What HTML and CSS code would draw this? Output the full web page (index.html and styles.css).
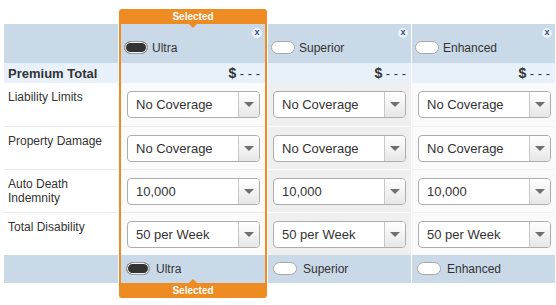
FILE: index.html
```html
<!DOCTYPE html>
<html>
<head>
<meta charset="utf-8">
<link rel="stylesheet" href="styles.css">
</head>
<body>
<div class="grid">
  <div class="col labels">
    <div class="spacer"></div>
    <div class="cell head"></div>
    <div class="cell prem"><span class="prem-title">Premium Total</span></div>
    <div class="cell body">Liability Limits</div>
    <div class="cell body">Property Damage</div>
    <div class="cell body">Auto Death<br>Indemnity</div>
    <div class="cell body">Total Disability</div>
    <div class="cell foot"></div>
  </div>

  <div class="col plan sel">
    <div class="tab tab-top">Selected</div>
    <div class="cell head">
      <span class="x">x</span>
      <div class="opt"><span class="pill on"></span><span>Ultra</span></div>
    </div>
    <div class="cell prem price"><b>$</b>&nbsp;- - -</div>
    <div class="cell body"><div class="dd"><span class="dd-text">No Coverage</span><span class="dd-arrow"></span></div></div>
    <div class="cell body"><div class="dd"><span class="dd-text">No Coverage</span><span class="dd-arrow"></span></div></div>
    <div class="cell body"><div class="dd"><span class="dd-text">10,000</span><span class="dd-arrow"></span></div></div>
    <div class="cell body"><div class="dd"><span class="dd-text">50 per Week</span><span class="dd-arrow"></span></div></div>
    <div class="cell foot"><div class="opt"><span class="pill on"></span><span>Ultra</span></div></div>
    <div class="tab tab-bottom">Selected</div>
  </div>

  <div class="col plan gray">
    <div class="spacer"></div>
    <div class="cell head">
      <span class="x">x</span>
      <div class="opt"><span class="pill"></span><span>Superior</span></div>
    </div>
    <div class="cell prem price"><b>$</b>&nbsp;- - -</div>
    <div class="cell body"><div class="dd"><span class="dd-text">No Coverage</span><span class="dd-arrow"></span></div></div>
    <div class="cell body"><div class="dd"><span class="dd-text">No Coverage</span><span class="dd-arrow"></span></div></div>
    <div class="cell body"><div class="dd"><span class="dd-text">10,000</span><span class="dd-arrow"></span></div></div>
    <div class="cell body"><div class="dd"><span class="dd-text">50 per Week</span><span class="dd-arrow"></span></div></div>
    <div class="cell foot"><div class="opt"><span class="pill"></span><span>Superior</span></div></div>
  </div>

  <div class="col plan light">
    <div class="spacer"></div>
    <div class="cell head">
      <span class="x">x</span>
      <div class="opt"><span class="pill"></span><span>Enhanced</span></div>
    </div>
    <div class="cell prem price"><b>$</b>&nbsp;- - -</div>
    <div class="cell body"><div class="dd"><span class="dd-text">No Coverage</span><span class="dd-arrow"></span></div></div>
    <div class="cell body"><div class="dd"><span class="dd-text">No Coverage</span><span class="dd-arrow"></span></div></div>
    <div class="cell body"><div class="dd"><span class="dd-text">10,000</span><span class="dd-arrow"></span></div></div>
    <div class="cell body"><div class="dd"><span class="dd-text">50 per Week</span><span class="dd-arrow"></span></div></div>
    <div class="cell foot"><div class="opt"><span class="pill"></span><span>Enhanced</span></div></div>
  </div>
</div>
</body>
</html>
```

FILE: styles.css
```css
html, body {
  margin: 0;
  padding: 0;
  background: #ffffff;
}

body {
  font-family: "Liberation Sans", Arial, sans-serif;
  color: #333333;
  font-size: 12px;
}

.grid {
  display: flex;
  align-items: flex-start;
  gap: 1px;
  padding: 9px 0 0 4px;
}

.col {
  display: flex;
  flex-direction: column;
}

.labels { width: 114px; }
.plan { width: 143px; }
.sel {
  width: 144px;
  padding: 0 2px;
  background: #ee8b23;
  border-radius: 3px;
}

.spacer { height: 15px; }

.cell {
  box-sizing: border-box;
  position: relative;
}

.head {
  height: 39px;
  background: #c9d9e8;
}

.prem {
  height: 20px;
  background: #e8f1fa;
  display: flex;
  align-items: center;
}

.prem-title {
  font-weight: bold;
  font-size: 13px;
  padding-left: 4px;
}

.price {
  justify-content: flex-end;
  padding-right: 5px;
  font-size: 13px;
  color: #333;
}

.price b {
  font-size: 14px;
}

.body {
  height: 43px;
  background: #ffffff;
}

.labels .body {
  padding: 7px 4px 0 4px;
  line-height: 14px;
  font-size: 12px;
}

.body + .body { border-top: 1px solid #ececec; }

.sel .body { background: #fbfbfb; }
.gray .body { background: #efefef; }
.gray .body + .body { border-top-color: #fafafa; }
.light .body { background: #fafafa; }
.light .body + .body { border-top-color: #f0f0f0; }

.plan .body {
  padding: 8px 4px 0 6px;
}
.gray .body { padding-left: 5px; }

.foot {
  height: 28px;
  background: #c9d9e8;
}

.tab {
  height: 15px;
  line-height: 16px;
  color: #ffffff;
  font-weight: bold;
  font-size: 10px;
  text-align: center;
  position: relative;
}

.tab-top::after {
  content: "";
  position: absolute;
  left: 50%;
  bottom: -4px;
  margin-left: -4px;
  border-left: 4px solid transparent;
  border-right: 4px solid transparent;
  border-top: 4px solid #ee8b23;
  z-index: 2;
}

.tab-bottom::before {
  content: "";
  position: absolute;
  left: 50%;
  top: -4px;
  margin-left: -4px;
  border-left: 4px solid transparent;
  border-right: 4px solid transparent;
  border-bottom: 4px solid #ee8b23;
  z-index: 2;
}

.x {
  position: absolute;
  right: 3px;
  top: 4px;
  width: 10px;
  height: 10px;
  border-radius: 50%;
  background: #eef3f9;
  color: #2e4f8e;
  font-weight: bold;
  font-size: 9px;
  line-height: 9px;
  text-align: center;
}

.opt {
  display: flex;
  align-items: center;
  gap: 4px;
  height: 13px;
  margin: 17px 0 0 3px;
  font-size: 12px;
}

.foot .opt {
  margin: 7px 0 0 5px;
  gap: 6px;
}

.pill {
  box-sizing: border-box;
  width: 24px;
  height: 13px;
  border-radius: 7px;
  border: 1px solid #a8a8a8;
  background: #ffffff;
}

.pill.on {
  background: #333333;
  border-color: #999999;
  box-shadow: inset 0 0 0 1px #f4f4f4;
}

.dd {
  box-sizing: border-box;
  width: 133px;
  height: 27px;
  border: 1px solid #adadad;
  border-radius: 4px;
  background: #ffffff;
  display: flex;
}

.dd-text {
  flex: 1;
  padding-left: 8px;
  font-size: 13px;
  line-height: 25px;
  color: #333333;
}

.dd-arrow {
  width: 20px;
  border-left: 1px solid #c8c8c8;
  border-radius: 0 3px 3px 0;
  background: linear-gradient(#ffffff, #e6e6e6);
  position: relative;
}

.dd-arrow::after {
  content: "";
  position: absolute;
  left: 5px;
  top: 10px;
  border-left: 5px solid transparent;
  border-right: 5px solid transparent;
  border-top: 5px solid #6f6f6f;
}
```
